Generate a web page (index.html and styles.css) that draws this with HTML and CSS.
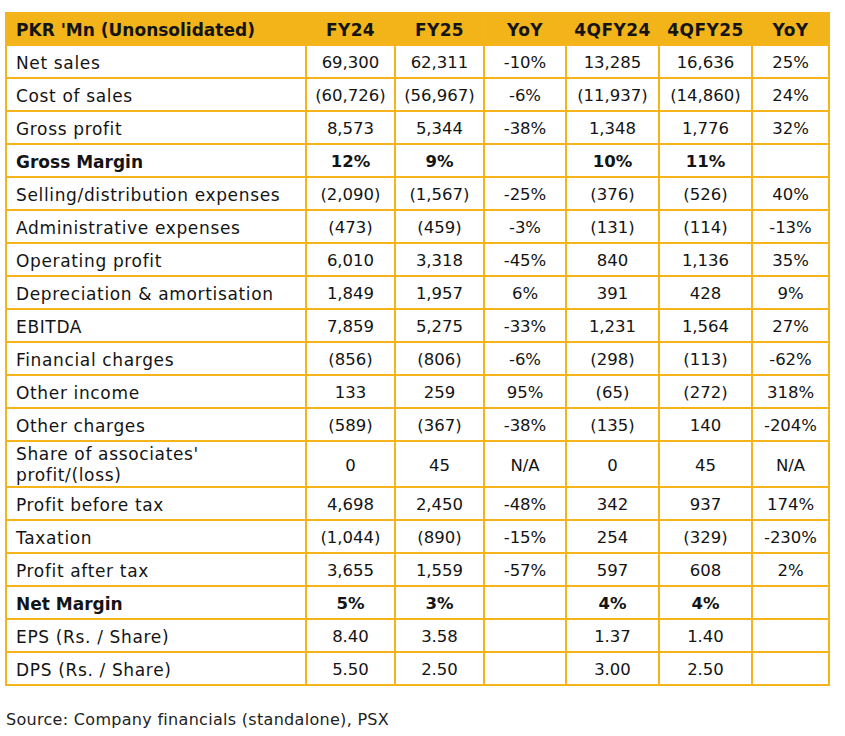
FILE: index.html
```html
<!DOCTYPE html>
<html>
<head>
<meta charset="utf-8">
<link rel="stylesheet" href="styles.css">
</head>
<body>
<div class="fin">
  <div class="cell head label">PKR 'Mn (Unonsolidated)</div>
  <div class="cell head">FY24</div>
  <div class="cell head">FY25</div>
  <div class="cell head">YoY</div>
  <div class="cell head">4QFY24</div>
  <div class="cell head">4QFY25</div>
  <div class="cell head">YoY</div>

  <div class="cell label">Net sales</div><div class="cell">69,300</div><div class="cell">62,311</div><div class="cell">-10%</div><div class="cell">13,285</div><div class="cell">16,636</div><div class="cell">25%</div>
  <div class="cell label">Cost of sales</div><div class="cell">(60,726)</div><div class="cell">(56,967)</div><div class="cell">-6%</div><div class="cell">(11,937)</div><div class="cell">(14,860)</div><div class="cell">24%</div>
  <div class="cell label">Gross profit</div><div class="cell">8,573</div><div class="cell">5,344</div><div class="cell">-38%</div><div class="cell">1,348</div><div class="cell">1,776</div><div class="cell">32%</div>
  <div class="cell label bold">Gross Margin</div><div class="cell bold">12%</div><div class="cell bold">9%</div><div class="cell"></div><div class="cell bold">10%</div><div class="cell bold">11%</div><div class="cell"></div>
  <div class="cell label">Selling/distribution expenses</div><div class="cell">(2,090)</div><div class="cell">(1,567)</div><div class="cell">-25%</div><div class="cell">(376)</div><div class="cell">(526)</div><div class="cell">40%</div>
  <div class="cell label">Administrative expenses</div><div class="cell">(473)</div><div class="cell">(459)</div><div class="cell">-3%</div><div class="cell">(131)</div><div class="cell">(114)</div><div class="cell">-13%</div>
  <div class="cell label">Operating profit</div><div class="cell">6,010</div><div class="cell">3,318</div><div class="cell">-45%</div><div class="cell">840</div><div class="cell">1,136</div><div class="cell">35%</div>
  <div class="cell label">Depreciation &amp; amortisation</div><div class="cell">1,849</div><div class="cell">1,957</div><div class="cell">6%</div><div class="cell">391</div><div class="cell">428</div><div class="cell">9%</div>
  <div class="cell label">EBITDA</div><div class="cell">7,859</div><div class="cell">5,275</div><div class="cell">-33%</div><div class="cell">1,231</div><div class="cell">1,564</div><div class="cell">27%</div>
  <div class="cell label">Financial charges</div><div class="cell">(856)</div><div class="cell">(806)</div><div class="cell">-6%</div><div class="cell">(298)</div><div class="cell">(113)</div><div class="cell">-62%</div>
  <div class="cell label">Other income</div><div class="cell">133</div><div class="cell">259</div><div class="cell">95%</div><div class="cell">(65)</div><div class="cell">(272)</div><div class="cell">318%</div>
  <div class="cell label">Other charges</div><div class="cell">(589)</div><div class="cell">(367)</div><div class="cell">-38%</div><div class="cell">(135)</div><div class="cell">140</div><div class="cell">-204%</div>
  <div class="cell label tall">Share of associates'<br>profit/(loss)</div><div class="cell tall">0</div><div class="cell tall">45</div><div class="cell tall">N/A</div><div class="cell tall">0</div><div class="cell tall">45</div><div class="cell tall">N/A</div>
  <div class="cell label">Profit before tax</div><div class="cell">4,698</div><div class="cell">2,450</div><div class="cell">-48%</div><div class="cell">342</div><div class="cell">937</div><div class="cell">174%</div>
  <div class="cell label">Taxation</div><div class="cell">(1,044)</div><div class="cell">(890)</div><div class="cell">-15%</div><div class="cell">254</div><div class="cell">(329)</div><div class="cell">-230%</div>
  <div class="cell label">Profit after tax</div><div class="cell">3,655</div><div class="cell">1,559</div><div class="cell">-57%</div><div class="cell">597</div><div class="cell">608</div><div class="cell">2%</div>
  <div class="cell label bold">Net Margin</div><div class="cell bold">5%</div><div class="cell bold">3%</div><div class="cell"></div><div class="cell bold">4%</div><div class="cell bold">4%</div><div class="cell"></div>
  <div class="cell label">EPS (Rs. / Share)</div><div class="cell">8.40</div><div class="cell">3.58</div><div class="cell"></div><div class="cell">1.37</div><div class="cell">1.40</div><div class="cell"></div>
  <div class="cell label">DPS (Rs. / Share)</div><div class="cell">5.50</div><div class="cell">2.50</div><div class="cell"></div><div class="cell">3.00</div><div class="cell">2.50</div><div class="cell"></div>
</div>
<p class="source">Source: Company financials (standalone), PSX</p>
</body>
</html>
```

FILE: styles.css
```css
html, body {
  margin: 0;
  padding: 0;
  background: #ffffff;
}
body {
  padding: 12px 0 0 5px;
  font-family: "DejaVu Sans", "Open Sans", sans-serif;
  color: #141414;
}
.fin {
  display: grid;
  grid-template-columns: 300px 89px 89px 82px 93px 93px 77px;
  grid-auto-rows: auto;
  width: 825px;
  box-sizing: border-box;
  border-left: 2px solid #F5B41A;
  border-top: 2px solid #F5B41A;
}
.cell {
  box-sizing: border-box;
  height: 33px;
  padding-top: 2px;
  border-right: 2px solid #F5B41A;
  border-bottom: 2px solid #F5B41A;
  display: flex;
  align-items: center;
  justify-content: center;
  font-size: 16.5px;
  letter-spacing: 0;
  line-height: 20px;
  white-space: nowrap;
}
.label {
  justify-content: flex-start;
  padding-left: 9px;
  font-size: 17px;
  letter-spacing: 0.65px;
}
.head {
  background: #F2B419;
  font-weight: 700;
  font-size: 17px;
  letter-spacing: 0.4px;
  height: 32px;
}
.head.label {
  letter-spacing: 0;
}
.bold {
  font-weight: 700;
}
.label.bold {
  letter-spacing: 0;
}
.tall {
  height: 46px;
  line-height: 21px;
}
.source {
  margin: 24px 0 0 1px;
  font-size: 16px;
  line-height: 20px;
  letter-spacing: 0.3px;
  color: #222;
}
```
